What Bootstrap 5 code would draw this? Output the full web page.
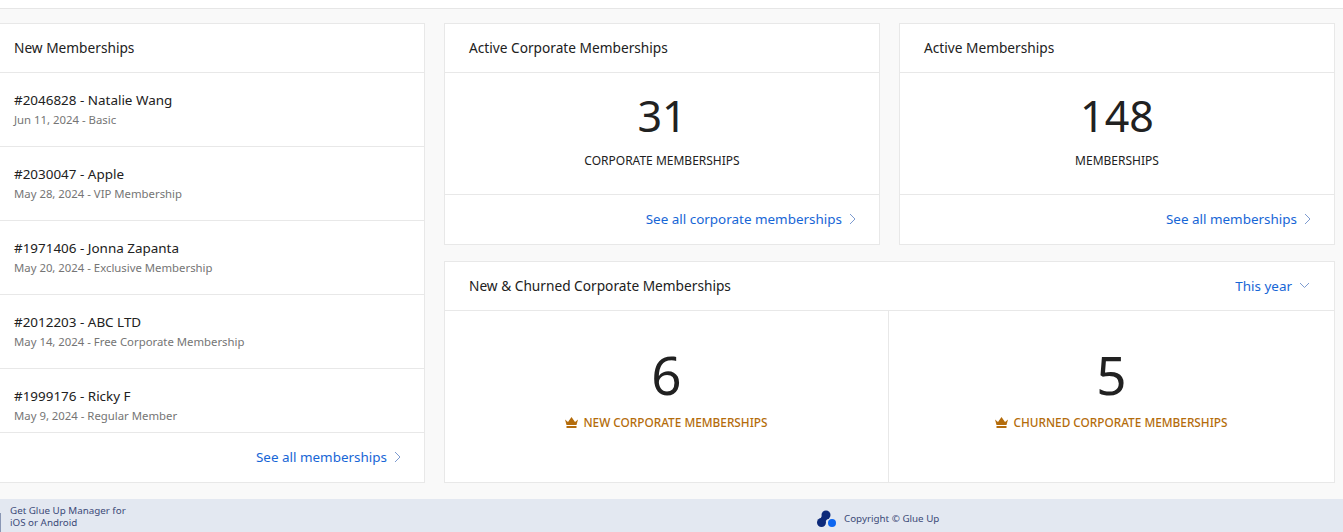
<!DOCTYPE html>
<html lang="en">
<head>
  <meta charset="UTF-8" />
  <title>Memberships</title>
  <link href="https://cdn.jsdelivr.net/npm/bootstrap@5.3.0/dist/css/bootstrap.min.css" rel="stylesheet"/>
  <style>
    html, body { height: 532px; overflow: hidden; }
    body {
      background-color: #f9f9f9;
      font-family: "Noto Sans", sans-serif;
      font-size: 13.7px;
      color: #212121;
    }
    .top-strip { height: 9px; background: #fff; border-bottom: 1px solid #e6e6e6; }
    .dash { height: 490px; padding: 14px 8px 16px 0; gap: 19px; }
    .panel { background: #fff; border: 1px solid #e8e8e8; }
    .side-panel { width: 425px; border-left: 0; flex: none; }
    .panel-head { height: 49px; padding: 0 24px; border-bottom: 1px solid #e8e8e8; flex: none; }
    .side-panel .panel-head { padding-left: 14px; }
    .panel-foot { height: 50px; padding: 0 23px 0 24px; border-top: 1px solid #e8e8e8; flex: none; }
    .feed { height: 360px; overflow: hidden; }
    .feed-row { height: 74px; padding: 18px 14px 0; border-bottom: 1px solid #e8e8e8; }
    .feed-row:last-child { border-bottom: 0; }
    .feed-name { font-size: 13.45px; line-height: 19px; margin-bottom: 1px; }
    .feed-sub { font-size: 11.35px; line-height: 17px; color: #757575; }
    .main-col { gap: 16px; flex: 1; min-width: 0; }
    .stat-row { gap: 19px; height: 222px; }
    .stat-body { flex: 1; padding-top: 15px; }
    .stat-num { font-size: 43px; line-height: 56px; }
    .stat-cap { font-size: 12px; line-height: 16px; color: #212121; margin-top: 9px; }
    .split-row { flex: 1; }
    .split-cell { flex: 1; padding-top: 31px; }
    .split-first { flex: 0 0 444px; border-right: 1px solid #e8e8e8; }
    .split-num { font-size: 53px; line-height: 66px; }
    .split-cap { font-size: 11.8px; font-weight: 500; line-height: 16px; color: #b46c0b; margin-top: 6px; gap: 5px; }
    .more-link { font-size: 13.45px; color: #1766d6; text-decoration: none; }
    .more-link svg { margin-left: 7px; }
    .bottom-bar { height: 33px; background: #e3e8f1; color: #3c4a78; font-size: 9.8px; line-height: 12px; }
    .app-tick { width: 1px; height: 19px; background: #8a97b5; margin-right: 9px; }
    .app-note { width: 116px; padding-top: 6px; white-space: nowrap; }
    .copy-line { margin-left: 691px; margin-top: 7px; gap: 7px; }
  </style>
</head>
<body>

<div class="top-strip"></div>

<div class="dash d-flex">
  <!-- left list -->
  <div class="panel side-panel d-flex flex-column">
    <div class="panel-head d-flex align-items-center">New Memberships</div>
    <div class="feed">
      <div class="feed-row"><div class="feed-name">#2046828 - Natalie Wang</div><div class="feed-sub">Jun 11, 2024 - Basic</div></div>
      <div class="feed-row"><div class="feed-name">#2030047 - Apple</div><div class="feed-sub">May 28, 2024 - VIP Membership</div></div>
      <div class="feed-row"><div class="feed-name">#1971406 - Jonna Zapanta</div><div class="feed-sub">May 20, 2024 - Exclusive Membership</div></div>
      <div class="feed-row"><div class="feed-name">#2012203 - ABC LTD</div><div class="feed-sub">May 14, 2024 - Free Corporate Membership</div></div>
      <div class="feed-row"><div class="feed-name">#1999176 - Ricky F</div><div class="feed-sub">May 9, 2024 - Regular Member</div></div>
    </div>
    <div class="panel-foot d-flex align-items-center justify-content-end">
      <a class="more-link d-flex align-items-center" href="#">See all memberships
        <svg width="7" height="12" viewBox="0 0 7 12" fill="none" stroke="#7d9bd0" stroke-width="1"><path d="M1 1l5 5-5 5"/></svg></a>
    </div>
  </div>

  <div class="main-col d-flex flex-column">
    <div class="stat-row d-flex">
      <div class="panel flex-fill w-50 d-flex flex-column">
        <div class="panel-head d-flex align-items-center">Active Corporate Memberships</div>
        <div class="stat-body text-center">
          <div class="stat-num">31</div>
          <div class="stat-cap">CORPORATE MEMBERSHIPS</div>
        </div>
        <div class="panel-foot d-flex align-items-center justify-content-end">
          <a class="more-link d-flex align-items-center" href="#">See all corporate memberships
            <svg width="7" height="12" viewBox="0 0 7 12" fill="none" stroke="#7d9bd0" stroke-width="1"><path d="M1 1l5 5-5 5"/></svg></a>
        </div>
      </div>
      <div class="panel flex-fill w-50 d-flex flex-column">
        <div class="panel-head d-flex align-items-center">Active Memberships</div>
        <div class="stat-body text-center">
          <div class="stat-num">148</div>
          <div class="stat-cap">MEMBERSHIPS</div>
        </div>
        <div class="panel-foot d-flex align-items-center justify-content-end">
          <a class="more-link d-flex align-items-center" href="#">See all memberships
            <svg width="7" height="12" viewBox="0 0 7 12" fill="none" stroke="#7d9bd0" stroke-width="1"><path d="M1 1l5 5-5 5"/></svg></a>
        </div>
      </div>
    </div>

    <div class="panel flex-fill d-flex flex-column">
      <div class="panel-head d-flex align-items-center justify-content-between">
        <span>New &amp; Churned Corporate Memberships</span>
        <a class="more-link d-flex align-items-center" href="#">This year
          <svg width="11" height="7" viewBox="0 0 11 7" fill="none" stroke="#7d9bd0" stroke-width="1"><path d="M1 1l4.500 4.500L10 1"/></svg></a>
      </div>
      <div class="split-row d-flex">
        <div class="split-cell split-first text-center">
          <div class="split-num">6</div>
          <div class="split-cap d-flex justify-content-center align-items-center">
            <svg width="13" height="11" viewBox="0 0 13 11" fill="#b46c0b"><path d="M0 2.500l3 2.500L6.500 0 10 5l3-2.500L11.500 8h-10zM1.500 9h10v2h-10z"/></svg>
            NEW CORPORATE MEMBERSHIPS
          </div>
        </div>
        <div class="split-cell text-center">
          <div class="split-num">5</div>
          <div class="split-cap d-flex justify-content-center align-items-center">
            <svg width="13" height="11" viewBox="0 0 13 11" fill="#b46c0b"><path d="M0 2.500l3 2.500L6.500 0 10 5l3-2.500L11.500 8h-10zM1.500 9h10v2h-10z"/></svg>
            CHURNED CORPORATE MEMBERSHIPS
          </div>
        </div>
      </div>
    </div>
  </div>
</div>

<div class="bottom-bar d-flex align-items-center">
  <span class="app-tick align-self-end"></span>
  <div class="app-note align-self-start">Get Glue Up Manager for<br>iOS or Android</div>
  <div class="copy-line d-flex align-items-center">
    <svg width="20" height="18" viewBox="0 0 20 18"><circle cx="9" cy="5" r="4.500" fill="#0d2a7a"/><circle cx="4.500" cy="12.500" r="4.500" fill="#0d2a7a"/><path d="M9 5L4.500 12.500" stroke="#0d2a7a" stroke-width="6"/><circle cx="15" cy="13" r="4" fill="#0d66f0"/></svg>
    <span>Copyright © Glue Up</span>
  </div>
</div>

<script src="https://cdn.jsdelivr.net/npm/bootstrap@5.3.0/dist/js/bootstrap.bundle.min.js"></script>
</body>
</html>
